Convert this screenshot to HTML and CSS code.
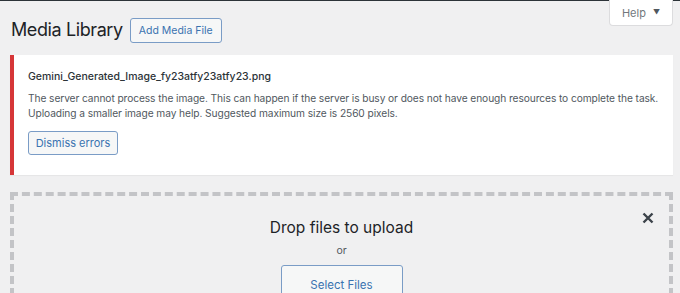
FILE: index.html
```html
<!DOCTYPE html>
<html>
<head>
<meta charset="utf-8">
<link rel="stylesheet" href="styles.css">
</head>
<body>
<div class="topbar"></div>
<div class="wrap">
  <div class="header">
    <div class="title-group">
      <h1 class="title">Media Library</h1>
      <button class="btn btn-add">Add Media File</button>
    </div>
    <button class="help-tab">Help <span class="caret">▼</span></button>
  </div>
  <div class="notice">
    <div class="filename">Gemini_Generated_Image_fy23atfy23atfy23.png</div>
    <p class="message">The server cannot process the image. This can happen if the server is busy or does not have enough resources to complete the task. Uploading a smaller image may help. Suggested maximum size is 2560 pixels.</p>
    <button class="btn btn-dismiss">Dismiss errors</button>
  </div>
  <div class="dropzone">
    <div class="close-row">
      <svg class="close-icon" width="12" height="12" viewBox="0 0 12 12"><path d="M1.5 1.5 L10.5 10.5 M10.5 1.5 L1.5 10.5" stroke="#3c434a" stroke-width="2.4" stroke-linecap="butt"/></svg>
    </div>
    <div class="drop-title">Drop files to upload</div>
    <div class="drop-or">or</div>
    <button class="btn btn-select">Select Files</button>
  </div>
</div>
</body>
</html>
```
FILE: styles.css
```css
* { box-sizing: border-box; }
html, body { margin: 0; padding: 0; }
body {
  background: #f0f0f1;
  font-family: "Inter", "Roboto", sans-serif;
  color: #1d2327;
  width: 680px;
  height: 293px;
  overflow: hidden;
}
.topbar { height: 1px; background: #2c3338; }
.wrap { padding: 0 7px 0 10px; }
.header {
  display: flex;
  align-items: flex-start;
  justify-content: space-between;
  height: 54px;
}
.title-group {
  display: flex;
  align-items: center;
  padding-top: 16px;
  gap: 7px;
  padding-left: 1px;
}
.title {
  margin: 0;
  font-size: 18px;
  font-weight: 400;
  letter-spacing: -0.4px;
  line-height: 26px;
  color: #1d2327;
}
.btn {
  font-family: inherit;
  background: #f6f7f7;
  border: 1px solid #7a9cc6;
  border-radius: 3px;
  color: #3a73b0;
  cursor: pointer;
  padding: 0;
}
.btn-add {
  width: 92px;
  height: 25px;
  font-size: 10.5px;
}
.help-tab {
  font-family: inherit;
  width: 64px;
  height: 26px;
  margin-top: -1px;
  background: #fff;
  border: 1px solid #dcdcde;
  border-top: none;
  border-radius: 0 0 4px 4px;
  color: #72777c;
  font-size: 11px;
  padding: 0;
}
.caret { font-size: 7px; margin-left: 4px; vertical-align: 2px; color: #50575e; }
.notice {
  background: #fff;
  border-left: 4px solid #d63638;
  box-shadow: 0 1px 1px rgba(0,0,0,0.04);
  height: 120px;
  padding: 15px 14px 0 14px;
}
.filename {
  font-size: 10.5px;
  font-weight: 500;
  color: #2c3338;
  line-height: 14px;
}
.message {
  margin: 7px 0 10px 0;
  font-size: 10.2px;
  letter-spacing: -0.08px;
  line-height: 15px;
  color: #50575e;
}
.btn-dismiss {
  width: 90px;
  height: 24px;
  font-size: 11px;
}
.dropzone {
  margin-top: 17px;
  border: 4px dashed #c3c4c7;
  height: 140px;
  display: flex;
  flex-direction: column;
  align-items: center;
}
.close-row {
  align-self: stretch;
  display: flex;
  justify-content: flex-end;
  padding: 16px 15px 0 0;
  height: 30px;
}
.drop-title {
  font-size: 15.5px;
  line-height: 20px;
  color: #1d2327;
  margin-top: -8px;
}
.drop-or {
  font-size: 10.5px;
  color: #50575e;
  margin-top: 6px;
}
.btn-select {
  margin-top: 8px;
  width: 122px;
  height: 40px;
  font-size: 11.5px;
}
```
